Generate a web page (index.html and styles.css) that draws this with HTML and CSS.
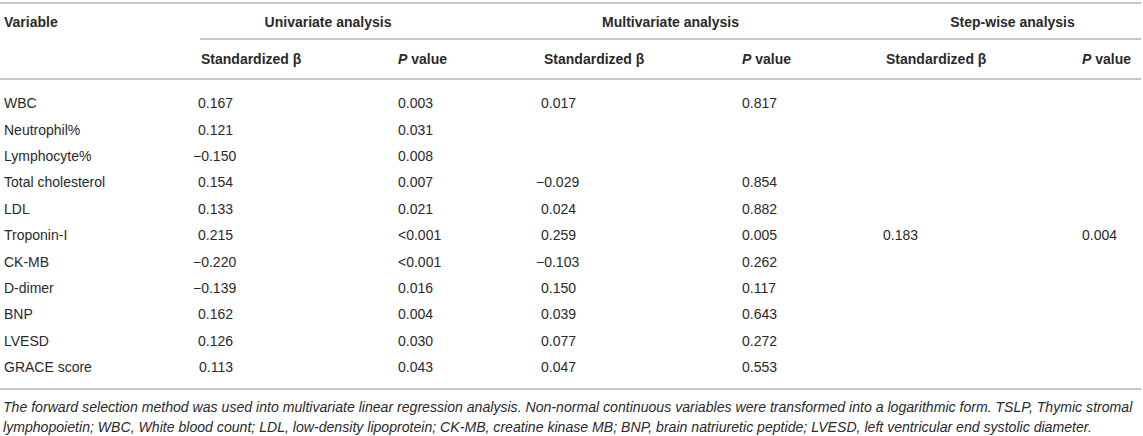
FILE: index.html
```html
<!DOCTYPE html>
<html lang="en">
<head>
<meta charset="utf-8">
<title>Table</title>
<link rel="stylesheet" href="styles.css">
</head>
<body>
<div class="wrap">
<table class="tbl">
  <colgroup>
    <col class="c1"><col class="c2"><col class="c3"><col class="c4"><col class="c5"><col class="c6"><col class="c7">
  </colgroup>
  <thead>
    <tr class="h1">
      <th class="var">Variable</th>
      <th class="grp first" colspan="2">Univariate analysis</th>
      <th class="grp" colspan="2">Multivariate analysis</th>
      <th class="grp last" colspan="2">Step-wise analysis</th>
    </tr>
    <tr class="h2">
      <th></th>
      <th class="sb">Standardized β</th>
      <th class="pv"><i>P</i> value</th>
      <th class="sb">Standardized β</th>
      <th class="pv"><i>P</i> value</th>
      <th class="sb">Standardized β</th>
      <th class="pv"><i>P</i> value</th>
    </tr>
  </thead>
  <tbody>
    <tr><td class="var">WBC</td><td><span class="n">0.167</span></td><td>0.003</td><td><span class="n">0.017</span></td><td>0.817</td><td></td><td></td></tr>
    <tr><td class="var">Neutrophil%</td><td><span class="n">0.121</span></td><td>0.031</td><td></td><td></td><td></td><td></td></tr>
    <tr><td class="var">Lymphocyte%</td><td><span class="n">−0.150</span></td><td>0.008</td><td></td><td></td><td></td><td></td></tr>
    <tr><td class="var">Total cholesterol</td><td><span class="n">0.154</span></td><td>0.007</td><td><span class="n">−0.029</span></td><td>0.854</td><td></td><td></td></tr>
    <tr><td class="var">LDL</td><td><span class="n">0.133</span></td><td>0.021</td><td><span class="n">0.024</span></td><td>0.882</td><td></td><td></td></tr>
    <tr><td class="var">Troponin-I</td><td><span class="n">0.215</span></td><td>&lt;0.001</td><td><span class="n">0.259</span></td><td>0.005</td><td><span class="n">0.183</span></td><td>0.004</td></tr>
    <tr><td class="var">CK-MB</td><td><span class="n">−0.220</span></td><td>&lt;0.001</td><td><span class="n">−0.103</span></td><td>0.262</td><td></td><td></td></tr>
    <tr><td class="var">D-dimer</td><td><span class="n">−0.139</span></td><td>0.016</td><td><span class="n">0.150</span></td><td>0.117</td><td></td><td></td></tr>
    <tr><td class="var">BNP</td><td><span class="n">0.162</span></td><td>0.004</td><td><span class="n">0.039</span></td><td>0.643</td><td></td><td></td></tr>
    <tr><td class="var">LVESD</td><td><span class="n">0.126</span></td><td>0.030</td><td><span class="n">0.077</span></td><td>0.272</td><td></td><td></td></tr>
    <tr><td class="var">GRACE score</td><td><span class="n">0.113</span></td><td>0.043</td><td><span class="n">0.047</span></td><td>0.553</td><td></td><td></td></tr>
  </tbody>
</table>
<p class="note">The forward selection method was used into multivariate linear regression analysis. Non-normal continuous variables were transformed into a logarithmic form. TSLP, Thymic stromal lymphopoietin; WBC, White blood count; LDL, low-density lipoprotein; CK-MB, creatine kinase MB; BNP, brain natriuretic peptide; LVESD, left ventricular end systolic diameter.</p>
</div>
</body>
</html>
```

FILE: styles.css
```css
html, body {
  margin: 0;
  padding: 0;
  background: #fff;
}
body {
  font-family: "Liberation Sans", Arial, Helvetica, sans-serif;
  color: #2a2a2a;
}
.wrap {
  padding-top: 2px;
  width: 1141px;
}
.tbl {
  width: 1141px;
  border-collapse: collapse;
  table-layout: fixed;
  font-size: 14px;
  border-top: 2px solid #c8c8c8;
  border-bottom: 2px solid #c8c8c8;
}
.c1 { width: 193px; }
.c2 { width: 205px; }
.c3 { width: 138px; }
.c4 { width: 206px; }
.c5 { width: 136px; }
.c6 { width: 204px; }
.c7 { width: 59px; }

th {
  font-weight: bold;
  text-align: left;
  padding: 0;
}
th i { font-style: italic; }
.h1 th {
  height: 36px;
  vertical-align: middle;
}
.h1 th.var { padding-left: 4px; }
.h1 th.grp {
  text-align: center;
  padding: 0 81px 0 8px;
  background-image: linear-gradient(#c8c8c8, #c8c8c8);
  background-repeat: no-repeat;
  background-position: right bottom;
  background-size: 100% 2px;
}
.h1 th.grp.first {
  background-size: calc(100% - 7px) 2px;
}
.h1 th.grp.last {
  padding-right: 2px;
}
.h2 th {
  height: 38px;
  vertical-align: middle;
  border-bottom: 2px solid #c8c8c8;
}
.h2 th.sb { padding-left: 8px; }

td {
  padding: 0;
  height: 26.4px;
  line-height: 16px;
  vertical-align: middle;
}
td.var { padding-left: 4px; }
tbody tr:first-child td { padding-top: 10px; }
tbody tr:last-child td { padding-bottom: 8px; }
.n {
  display: inline-block;
  width: 40px;
  text-align: right;
}
.note {
  margin: 7px 0 0 3px;
  width: 1138px;
  font-size: 14.1px;
  font-style: italic;
  line-height: 20px;
  color: #2a2a2a;
}
```
